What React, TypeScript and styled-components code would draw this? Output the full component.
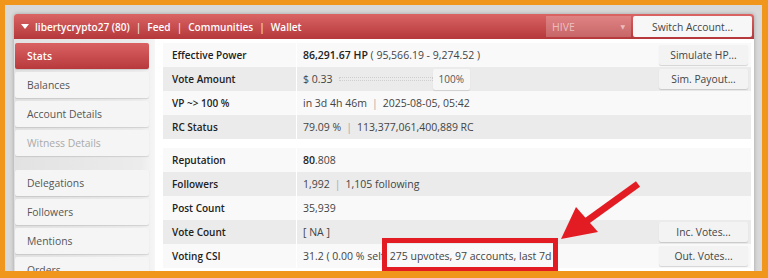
import React from 'react';
import styled, { createGlobalStyle } from 'styled-components';

const GlobalStyle = createGlobalStyle`
  html, body {
    margin: 0;
    padding: 0;
    background: #f0961c;
  }
  body {
    font-family: "Open Sans", "DejaVu Sans", sans-serif;
  }
  * {
    box-sizing: border-box;
  }
`;

const Frame = styled.div`
  position: relative;
  width: 768px;
  height: 278px;
  background: #f0961c;
  padding: 5px 6px 7px 5px;
`;

const Inner = styled.div`
  position: relative;
  height: 100%;
  overflow: hidden;
  background: #d9d9d9;
  padding: 9px 8px 0 9px;
`;

const Window = styled.div`
  background: #fff;
  box-shadow: 0 0 4px rgba(0, 0, 0, 0.25);
  border-radius: 3px 3px 0 0;
`;

const Header = styled.div`
  height: 25px;
  display: flex;
  align-items: center;
  padding: 0 2px 0 7px;
  border-radius: 3px 3px 0 0;
  background: linear-gradient(#da6464, #b5383b);
  color: #fff;
`;

const Caret = styled.span`
  width: 0;
  height: 0;
  border-left: 4px solid transparent;
  border-right: 4px solid transparent;
  border-top: 5px solid #fff;
  margin-right: 6px;
`;

const NavText = styled.div`
  flex: 1;
  font-size: 10.1px;
  font-weight: 600;
  white-space: nowrap;
`;

const Sep = styled.span`
  margin: 0 6px;
  font-weight: 400;
`;

const Select = styled.div`
  width: 85px;
  height: 21px;
  display: flex;
  align-items: center;
  justify-content: space-between;
  padding: 0 6px 0 6px;
  background: rgba(255, 255, 255, 0.22);
  color: rgba(255, 255, 255, 0.55);
  font-size: 10.5px;
  span {
    font-size: 6px;
  }
`;

const SwitchButton = styled.div`
  width: 119px;
  height: 21px;
  margin-left: 2px;
  display: flex;
  align-items: center;
  justify-content: center;
  background: #f7f7f7;
  border-radius: 2px;
  color: #444;
  font-size: 10.3px;
`;

const Body = styled.div`
  display: flex;
`;

const Sidebar = styled.div`
  width: 141px;
  padding: 4px 6px 0 1px;
  background: linear-gradient(90deg, #e2e2e2, #ececec 90%, #f6f6f6);
  display: flex;
  flex-direction: column;
  gap: 3px;
`;

const NavItem = styled.div<{ $active?: boolean; $disabled?: boolean; $gapBefore?: boolean }>`
  height: 26px;
  display: flex;
  align-items: center;
  padding-left: 12px;
  border-radius: 2px;
  font-size: 10.4px;
  margin-top: ${p => (p.$gapBefore ? '11px' : '0')};
  background: ${p => (p.$active ? 'linear-gradient(#da6262, #b8393c)' : '#f5f5f5')};
  color: ${p => (p.$active ? '#fff' : p.$disabled ? '#aaa' : '#555')};
  font-weight: ${p => (p.$active ? 600 : 400)};
  box-shadow: 0 1px 1px rgba(0, 0, 0, 0.12);
`;

const Main = styled.div`
  flex: 1;
  padding: 4px 3px 0 8px;
`;

const Table = styled.div<{ $gapBefore?: boolean }>`
  margin-top: ${p => (p.$gapBefore ? '9px' : '0')};
  & > div:nth-child(odd) {
    background: #f9f9f9;
  }
  & > div:nth-child(even) {
    background: #ebebeb;
  }
`;

const Row = styled.div`
  height: 24px;
  display: grid;
  grid-template-columns: 133px 1fr auto;
  align-items: center;
`;

const Label = styled.div`
  padding-left: 9px;
  font-size: 10px;
  font-weight: 600;
  color: #222;
`;

const Value = styled.div`
  height: 100%;
  display: flex;
  align-items: center;
  padding-left: 6px;
  border-left: 1px solid #fff;
  font-size: 10.5px;
  color: #444;
  white-space: nowrap;
  b {
    font-weight: 600;
    color: #222;
  }
`;

const Pipe = styled.span`
  color: #aaa;
  margin: 0 5px;
`;

const Bar = styled.div`
  width: 94px;
  height: 4px;
  margin-left: 6px;
  border: 1px dotted #cfcfcf;
`;

const Percent = styled.div`
  height: 21px;
  padding: 0 6px;
  display: flex;
  align-items: center;
  background: #f6f6f6;
  border-radius: 2px;
  box-shadow: 0 1px 1px rgba(0, 0, 0, 0.12);
  font-size: 10px;
  color: #555;
`;

const ActionButton = styled.div`
  width: 89px;
  height: 20px;
  margin-right: 3px;
  display: flex;
  align-items: center;
  justify-content: center;
  background: #f3f3f3;
  border-radius: 2px;
  box-shadow: 0 1px 1px rgba(0, 0, 0, 0.15);
  font-size: 10.3px;
  color: #444;
`;

const Highlight = styled.span`
  position: relative;
  &::after {
    content: '';
    position: absolute;
    left: -8px;
    right: -7px;
    top: -11px;
    bottom: -9px;
    border: 5px solid #e31b23;
  }
`;

const Arrow = styled.svg`
  position: absolute;
  left: 0;
  top: 0;
  pointer-events: none;
`;

const navTop = ['Balances', 'Account Details'];
const navBottom = ['Followers', 'Mentions', 'Orders'];

export default function App() {
  return (
    <>
      <GlobalStyle />
      <Frame>
        <Inner>
          <Window>
            <Header>
              <Caret />
              <NavText>
                libertycrypto27 (80)<Sep>|</Sep>Feed<Sep>|</Sep>Communities<Sep>|</Sep>Wallet
              </NavText>
              <Select>
                HIVE <span>▼</span>
              </Select>
              <SwitchButton>Switch Account...</SwitchButton>
            </Header>
            <Body>
              <Sidebar>
                <NavItem $active>Stats</NavItem>
                {navTop.map(n => (
                  <NavItem key={n}>{n}</NavItem>
                ))}
                <NavItem $disabled>Witness Details</NavItem>
                <NavItem $gapBefore>Delegations</NavItem>
                {navBottom.map(n => (
                  <NavItem key={n}>{n}</NavItem>
                ))}
              </Sidebar>
              <Main>
                <Table>
                  <Row>
                    <Label>Effective Power</Label>
                    <Value>
                      <b>86,291.67 HP</b>&nbsp;( 95,566.19 - 9,274.52 )
                    </Value>
                    <ActionButton>Simulate HP...</ActionButton>
                  </Row>
                  <Row>
                    <Label>Vote Amount</Label>
                    <Value>
                      $ 0.33
                      <Bar />
                      <Percent>100%</Percent>
                    </Value>
                    <ActionButton>Sim. Payout...</ActionButton>
                  </Row>
                  <Row>
                    <Label>VP ~&gt; 100 %</Label>
                    <Value>
                      in 3d 4h 46m<Pipe>|</Pipe>2025-08-05, 05:42
                    </Value>
                    <span />
                  </Row>
                  <Row>
                    <Label>RC Status</Label>
                    <Value>
                      79.09 %<Pipe>|</Pipe>113,377,061,400,889 RC
                    </Value>
                    <span />
                  </Row>
                </Table>
                <Table $gapBefore>
                  <Row>
                    <Label>Reputation</Label>
                    <Value>
                      <b>80</b>.808
                    </Value>
                    <span />
                  </Row>
                  <Row>
                    <Label>Followers</Label>
                    <Value>
                      1,992<Pipe>|</Pipe>1,105 following
                    </Value>
                    <span />
                  </Row>
                  <Row>
                    <Label>Post Count</Label>
                    <Value>35,939</Value>
                    <span />
                  </Row>
                  <Row>
                    <Label>Vote Count</Label>
                    <Value>[ NA ]</Value>
                    <ActionButton>Inc. Votes...</ActionButton>
                  </Row>
                  <Row>
                    <Label>Voting CSI</Label>
                    <Value>
                      31.2 ( 0.00 % self,&nbsp;<Highlight>275 upvotes, 97 accounts, last 7d</Highlight>&nbsp;)
                    </Value>
                    <ActionButton>Out. Votes...</ActionButton>
                  </Row>
                </Table>
              </Main>
            </Body>
          </Window>
        </Inner>
        <Arrow width="768" height="278" viewBox="0 0 768 278">
          <line x1="638" y1="184" x2="584" y2="223" stroke="#e31b23" strokeWidth="7" />
          <polygon points="561,239 576,207 598,232" fill="#e31b23" />
        </Arrow>
      </Frame>
    </>
  );
}
